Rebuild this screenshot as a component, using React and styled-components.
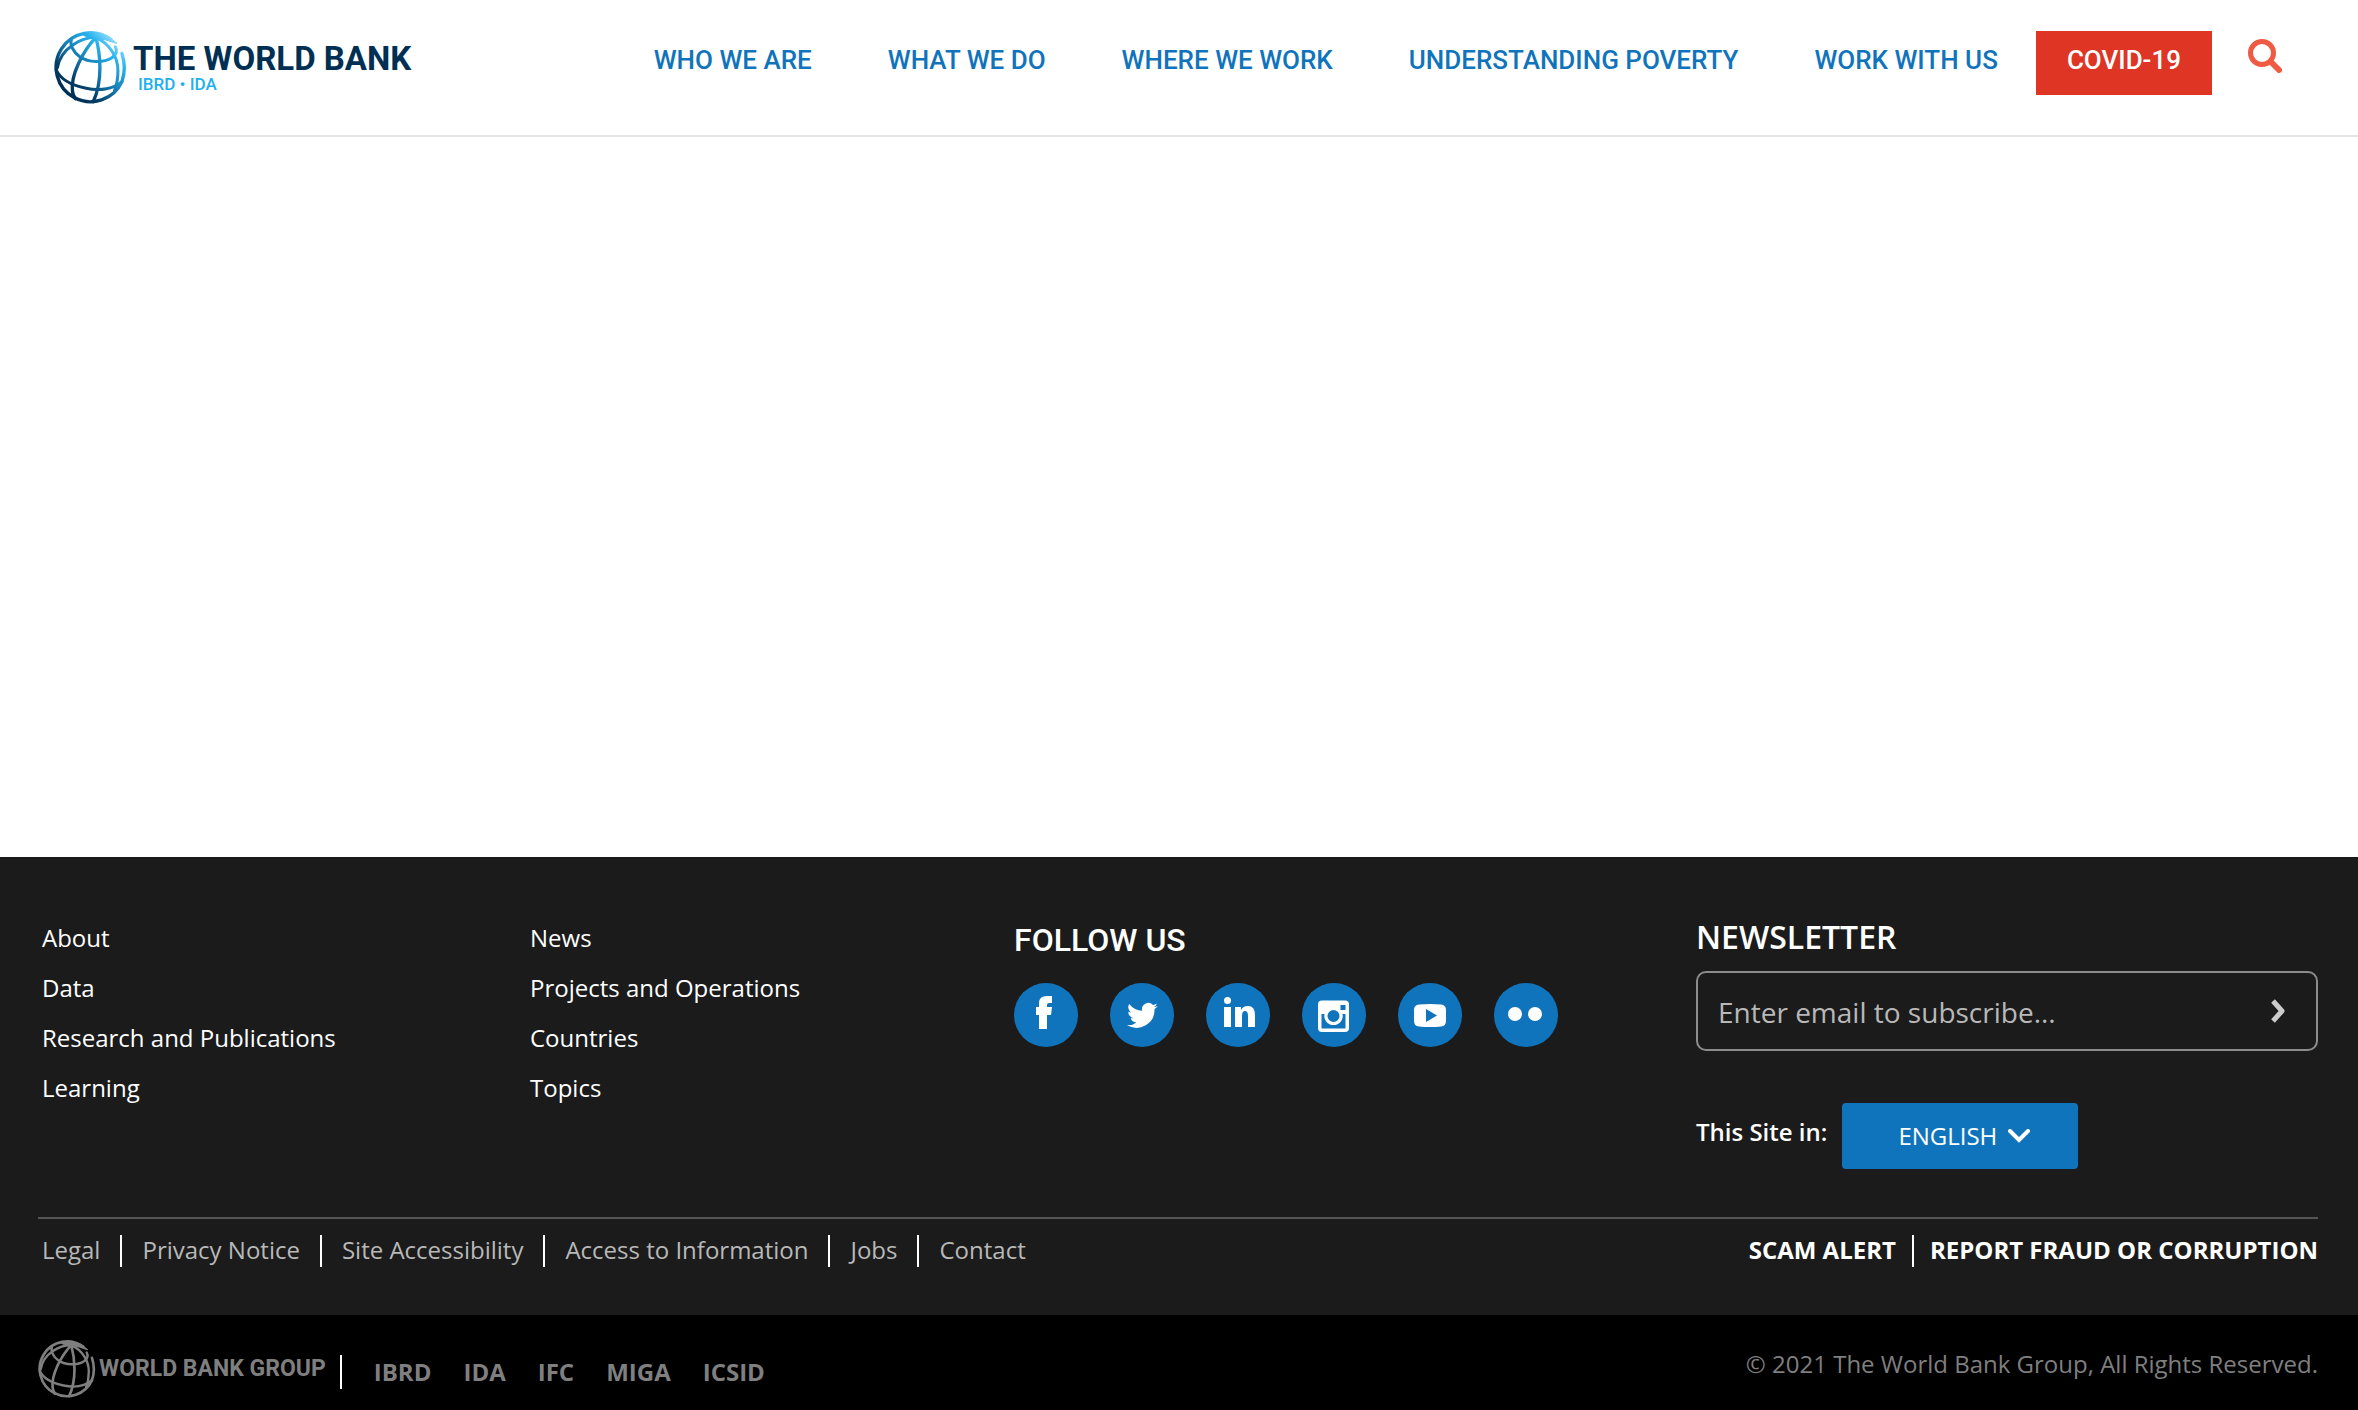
import React from "react";
import styled, { createGlobalStyle } from "styled-components";

const GlobalStyle = createGlobalStyle`
  *, *::before, *::after { box-sizing: border-box; }
  body {
    margin: 0;
    background: #fff;
    color: #fff;
    font-family: "Open Sans", "Noto Sans", sans-serif;
    font-size: 24px;
    line-height: 32px;
  }
  ul { margin: 0; padding: 0; list-style: none; }
  a { color: inherit; text-decoration: none; }
`;

const Page = styled.div`
  display: flex;
  flex-direction: column;
  min-height: 100vh;
`;

const Header = styled.header`
  display: flex;
  justify-content: space-between;
  align-items: flex-start;
  padding: 31px 76px 31px 54px;
  border-bottom: 2px solid #e5e5e5;
`;

const Brand = styled.a`
  display: flex;
  gap: 6px;
  font-family: Roboto, sans-serif;
`;

const BrandText = styled.span`
  display: flex;
  flex-direction: column;
  padding-top: 11px;
`;

const BrandName = styled.span`
  color: #002f54;
  font-size: 33px;
  font-weight: 700;
  line-height: 34px;
`;

const BrandUnits = styled.span`
  padding-left: 5px;
  color: #1fb0f0;
  font-size: 17px;
  font-weight: 500;
  line-height: 16px;
`;

const Nav = styled.nav`
  display: flex;
  align-items: flex-start;
`;

const NavList = styled.ul`
  display: flex;
`;

const NavLink = styled.a`
  display: block;
  padding: 14px ${(p) => (p.$alert ? 31 : 38)}px 20px;
  background: ${(p) => (p.$alert ? "#de3524" : "transparent")};
  color: ${(p) => (p.$alert ? "#fff" : "#1074bc")};
  font-family: Roboto, sans-serif;
  font-size: 26px;
  font-weight: 500;
  line-height: 30px;
  white-space: nowrap;
`;

const IconButton = styled.button`
  display: flex;
  padding: 0;
  border: 0;
  background: none;
  cursor: pointer;
`;

const SearchButton = styled(IconButton)`
  margin: 8px 0 0 36px;
`;

const Main = styled.main`
  flex: 1;
`;

const Footer = styled.footer`
  padding: 56px 40px 48px 38px;
  background: #1b1b1b;
`;

const FooterGrid = styled.div`
  display: grid;
  grid-template-columns: 488fr 484fr 682fr 622fr;
  padding-left: 4px;
`;

const LinkList = styled.ul`
  line-height: 50px;
`;

const Section = styled.section`
  padding-top: ${(p) => p.$top}px;
`;

const SectionTitle = styled.h2`
  margin: 0;
  font-family: ${(p) => (p.$alt ? "Roboto" : '"Open Sans"')}, sans-serif;
  font-size: 32px;
  font-weight: ${(p) => (p.$alt ? 500 : 600)};
  line-height: 44px;
`;

const SocialList = styled.ul`
  display: flex;
  gap: 32px;
  padding-top: 21px;
`;

const SocialLink = styled.a`
  display: block;
  width: 64px;
  height: 64px;
  border-radius: 50%;
  background: #1074bc;
`;

const EmailForm = styled.form`
  display: flex;
  align-items: center;
  height: 80px;
  margin-top: 12px;
  padding: 0 30px 0 20px;
  border: 2px solid #8c8c8c;
  border-radius: 10px;
`;

const EmailInput = styled.input`
  flex: 1;
  min-width: 0;
  padding: 2px 0 0;
  border: 0;
  outline: 0;
  background: transparent;
  color: #fff;
  font: 28px/40px "Open Sans", sans-serif;

  &::placeholder { color: #b8b8b8; opacity: 1; }
`;

const LanguageRow = styled.div`
  display: flex;
  align-items: flex-start;
  gap: 15px;
  padding-top: 52px;
`;

const LanguageLabel = styled.label`
  padding-top: 13px;
  font-weight: 600;
`;

const SelectBox = styled.div`
  display: grid;
  align-items: center;
  width: 236px;

  > * { grid-area: 1 / 1; }
  > svg { justify-self: end; margin-right: 48px; pointer-events: none; }
`;

const LanguageSelect = styled.select`
  appearance: none;
  height: 66px;
  padding: 0 56px;
  border: 0;
  border-radius: 4px;
  background: #1074bc;
  color: #fff;
  font: 24px/32px "Open Sans", sans-serif;
`;

const LegalRow = styled.div`
  display: flex;
  justify-content: space-between;
  margin-top: 48px;
  padding: 16px 0 0 4px;
  border-top: 2px solid #555;
  line-height: 30px;
`;

const DividedList = styled.ul`
  display: flex;
  color: ${(p) => (p.$strong ? "#fff" : "#b8b8b8")};
  font-weight: ${(p) => (p.$strong ? 700 : 400)};

  li { padding-bottom: 2px; }

  li + li {
    margin-left: ${(p) => (p.$strong ? 16 : 20)}px;
    padding-left: ${(p) => (p.$strong ? 16 : 20)}px;
    border-left: 2px solid #fff;
  }
`;

const GroupBar = styled.div`
  display: flex;
  justify-content: space-between;
  align-items: flex-start;
  padding: 25px 40px 12px 38px;
  background: #000;
  color: #7f7f7f;
`;

const GroupSide = styled.div`
  display: flex;
  align-items: flex-start;
`;

const GroupLogo = styled.a`
  display: flex;
  align-items: center;
  gap: 3px;
  font-family: Roboto, sans-serif;
  font-size: 23px;
  font-weight: 700;
`;

const GroupList = styled.ul`
  display: flex;
  gap: 32px;
  margin: 15px 0 0 14px;
  padding-left: 32px;
  border-left: 2px solid #fff;
  font-weight: 700;
  line-height: 34px;
`;

const Copyright = styled.p`
  margin: 8px 0 0;
`;

function Globe({ size, mono }) {
  const ink = mono || "url(#globe-ink)";
  return (
    <svg width={size} height={size} viewBox="26 27 218 218" fill="none" stroke={ink} strokeWidth="10" strokeLinecap="round" aria-hidden="true">
      {!mono && (
        <defs>
          <linearGradient id="globe-ink" gradientUnits="userSpaceOnUse" x1="215" y1="60" x2="75" y2="215">
            <stop offset="0" stopColor="#8fdcff" />
            <stop offset="0.2" stopColor="#27b2ee" />
            <stop offset="0.5" stopColor="#1781b8" />
            <stop offset="0.8" stopColor="#053f68" />
            <stop offset="1" stopColor="#002f54" />
          </linearGradient>
        </defs>
      )}
      <path d="M196 52A103 103 0 1 0 229 178Q243 138 229 94" />
      <path d="M112 38C134 29 168 31 190 45L214 64C195 60 188 54 172 52C156 58 147 50 136 47C128 46 119 43 112 38Z" fill={ink} strokeWidth="3" />
      <path d="M78 53C73 68 84 91 103 104C130 122 174 123 199 107C211 98 216 86 209 74" strokeWidth="9" />
      <path d="M32 142C45 172 82 190 122 198C165 207 205 199 229 178" strokeWidth="9" />
      <path d="M151 46C107 47 46 77 36 137" strokeWidth="9" />
      <path d="M151 46C111 88 76 159 81 205Q82 220 90 229" />
      <path d="M151 46C164 93 173 176 143 238" />
      <path d="M151 46C195 66 217 108 217 145Q217 178 207 204" strokeWidth="9" />
    </svg>
  );
}

const socials = [
  ["Facebook", <path key="f" d="M25 46V32H22V24H25V20Q25 13 33 13H38V20H35Q33 20 33 22V24H38L37 32H33V46Z" />],
  ["Twitter", <path key="t" transform="translate(17 17) scale(1.28)" d="M24 4.6a10 10 0 0 1-2.8.8 4.9 4.9 0 0 0 2.2-2.7 10 10 0 0 1-3.1 1.2 4.9 4.9 0 0 0-8.4 4.5A14 14 0 0 1 1.7 3.100a4.900 4.900 0 0 0 1.500 6.600 4.900 4.900 0 0 1-2.200-.6 4.900 4.900 0 0 0 4 4.900 4.900 4.900 0 0 1-2.200.1 4.900 4.900 0 0 0 4.600 3.400A10 10 0 0 1 0 19.500a14 14 0 0 0 21.500-12.500A10 10 0 0 0 24 4.600Z" />],
  ["LinkedIn", <path key="l" d="M18 24H25V44H18ZM29 24H35V27Q37 23 42 23Q49 23 49 32V44H42V33Q42 28 39 28Q36 28 36 33V44H29ZM21.500 14A3.500 3.500 0 1 1 21.500 21A3.500 3.500 0 1 1 21.500 14Z" />],
  ["Instagram", <path key="i" fillRule="evenodd" d="M20 17.500H43Q47 17.500 47 21.500V45Q47 49 43 49H20Q16 49 16 45V21.500Q16 17.500 20 17.500ZM38.500 22V27H43.500V22ZM19.500 31V45.500H43.500V31H40.500A9.200 9.200 0 1 1 22.500 31ZM31.500 27A6 6 0 1 0 31.500 39A6 6 0 1 0 31.500 27Z" />],
  ["YouTube", <path key="y" fillRule="evenodd" d="M21 21.500Q32 20.500 43 21.500Q48 22 48 27V38Q48 43 43 43.500Q32 44.500 21 43.500Q16 43 16 38V27Q16 22 21 21.500ZM28 26V39L39 32.500Z" />],
  ["Flickr", <g key="k"><circle cx="21" cy="31" r="7" /><circle cx="41" cy="31" r="7" /></g>],
];

const navItems = ["WHO WE ARE", "WHAT WE DO", "WHERE WE WORK", "UNDERSTANDING POVERTY", "WORK WITH US"];
const siteLinks = [
  ["About", "Data", "Research and Publications", "Learning"],
  ["News", "Projects and Operations", "Countries", "Topics"],
];
const legalLinks = ["Legal", "Privacy Notice", "Site Accessibility", "Access to Information", "Jobs", "Contact"];
const alertLinks = ["SCAM ALERT", "REPORT FRAUD OR CORRUPTION"];
const groupLinks = ["IBRD", "IDA", "IFC", "MIGA", "ICSID"];

const linkItems = (names) =>
  names.map((name) => (
    <li key={name}><a href="#">{name}</a></li>
  ));

export default function App() {
  return (
    <Page>
      <GlobalStyle />
      <Header>
        <Brand href="#">
          <Globe size={73} />
          <BrandText>
            <BrandName>THE WORLD BANK</BrandName>
            <BrandUnits>IBRD • IDA</BrandUnits>
          </BrandText>
        </Brand>
        <Nav>
          <NavList>
            {navItems.map((name) => (
              <li key={name}><NavLink href="#">{name}</NavLink></li>
            ))}
            <li><NavLink href="#" $alert>COVID-19</NavLink></li>
          </NavList>
          <SearchButton type="button" aria-label="Search">
            <svg width="34" height="34" viewBox="0 0 34 34" fill="none" stroke="#ef5a42" aria-hidden="true">
              <circle cx="14" cy="14" r="11.500" strokeWidth="5" />
              <path d="M23 23L31 31" strokeWidth="6" strokeLinecap="round" />
            </svg>
          </SearchButton>
        </Nav>
      </Header>

      <Main />

      <Footer>
        <FooterGrid>
          {siteLinks.map((names) => (
            <LinkList key={names[0]}>{linkItems(names)}</LinkList>
          ))}
          <Section $top={5}>
            <SectionTitle $alt>FOLLOW US</SectionTitle>
            <SocialList>
              {socials.map(([name, glyph]) => (
                <li key={name}>
                  <SocialLink href="#" aria-label={name}>
                    <svg width="64" height="64" viewBox="0 0 64 64" fill="#fff" aria-hidden="true">{glyph}</svg>
                  </SocialLink>
                </li>
              ))}
            </SocialList>
          </Section>
          <Section $top={2}>
            <SectionTitle>NEWSLETTER</SectionTitle>
            <EmailForm onSubmit={(e) => e.preventDefault()}>
              <EmailInput type="email" aria-label="Email address" placeholder="Enter email to subscribe..." />
              <IconButton type="submit" aria-label="Subscribe">
                <svg width="16" height="24" viewBox="0 0 16 24" fill="none" stroke="#ccc" strokeWidth="5" aria-hidden="true">
                  <path d="M3 2L12 12L3 22" strokeLinejoin="round" />
                </svg>
              </IconButton>
            </EmailForm>
            <LanguageRow>
              <LanguageLabel htmlFor="language">This Site in:</LanguageLabel>
              <SelectBox>
                <LanguageSelect id="language" defaultValue="en">
                  <option value="en">ENGLISH</option>
                </LanguageSelect>
                <svg width="22" height="14" viewBox="0 0 22 14" fill="none" stroke="#fff" strokeWidth="4" aria-hidden="true">
                  <path d="M2 2L11 11L20 2" strokeLinecap="round" />
                </svg>
              </SelectBox>
            </LanguageRow>
          </Section>
        </FooterGrid>
        <LegalRow>
          <DividedList>{linkItems(legalLinks)}</DividedList>
          <DividedList $strong>{linkItems(alertLinks)}</DividedList>
        </LegalRow>
      </Footer>

      <GroupBar>
        <GroupSide>
          <GroupLogo href="#">
            <Globe size={58} mono="#7f7f7f" />
            WORLD BANK GROUP
          </GroupLogo>
          <GroupList>{linkItems(groupLinks)}</GroupList>
        </GroupSide>
        <Copyright>© 2021 The World Bank Group, All Rights Reserved.</Copyright>
      </GroupBar>
    </Page>
  );
}
